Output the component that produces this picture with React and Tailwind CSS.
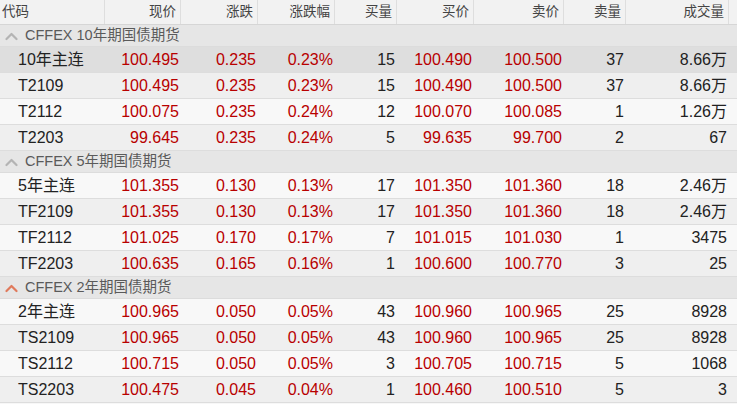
import React from "react";

const cols = ["w-[105px]", "w-[76px]", "w-[77px]", "w-[77px]", "w-[62px]", "w-[77px]", "w-[90px]", "w-[62px]", "w-[103px]"];
const heads = ["代码", "现价", "涨跌", "涨跌幅", "买量", "买价", "卖价", "卖量", "成交量"];
const red = [false, true, true, true, false, true, true, false, false];

const groups = [
  {
    title: "CFFEX 10年期国债期货",
    accent: false,
    rows: [
      ["10年主连", "100.495", "0.235", "0.23%", "15", "100.490", "100.500", "37", "8.66万"],
      ["T2109", "100.495", "0.235", "0.23%", "15", "100.490", "100.500", "37", "8.66万"],
      ["T2112", "100.075", "0.235", "0.24%", "12", "100.070", "100.085", "1", "1.26万"],
      ["T2203", "99.645", "0.235", "0.24%", "5", "99.635", "99.700", "2", "67"],
    ],
  },
  {
    title: "CFFEX 5年期国债期货",
    accent: false,
    rows: [
      ["5年主连", "101.355", "0.130", "0.13%", "17", "101.350", "101.360", "18", "2.46万"],
      ["TF2109", "101.355", "0.130", "0.13%", "17", "101.350", "101.360", "18", "2.46万"],
      ["TF2112", "101.025", "0.170", "0.17%", "7", "101.015", "101.030", "1", "3475"],
      ["TF2203", "100.635", "0.165", "0.16%", "1", "100.600", "100.770", "3", "25"],
    ],
  },
  {
    title: "CFFEX 2年期国债期货",
    accent: true,
    rows: [
      ["2年主连", "100.965", "0.050", "0.05%", "43", "100.960", "100.965", "25", "8928"],
      ["TS2109", "100.965", "0.050", "0.05%", "43", "100.960", "100.965", "25", "8928"],
      ["TS2112", "100.715", "0.050", "0.05%", "3", "100.705", "100.715", "5", "1068"],
      ["TS2203", "100.475", "0.045", "0.04%", "1", "100.460", "100.510", "5", "3"],
    ],
  },
];

function Chevron({ accent }) {
  return (
    <svg width="13" height="10" viewBox="0 0 13 10" className="shrink-0">
      <polyline
        points="1.5,8 6.5,3 11.5,8"
        fill="none"
        stroke={accent ? "#e07a5c" : "#b4b4b4"}
        strokeWidth="2.2"
        strokeLinecap="round"
        strokeLinejoin="round"
      />
    </svg>
  );
}

export default function App() {
  return (
    <div className="w-[737px] h-[404px] overflow-hidden bg-[#f7f7f7] font-['Liberation_Sans','Noto_Sans_CJK_SC',sans-serif]">
      <div className="flex h-[25px] bg-[#f2f2f2] border-b border-[#d6d6d6] text-[13.5px] text-[#444]">
        {heads.map((h, i) => (
          <div
            key={h}
            className={`${cols[i]} shrink-0 flex items-center border-r border-[#dedede] ${i === 0 ? "justify-start pl-[2px]" : "justify-end pr-[4px]"}`}
          >
            {h}
          </div>
        ))}
        <div className="flex-1" />
      </div>
      {groups.map((g, gi) => (
        <div key={gi}>
          <div className="flex items-center h-[22px] bg-[#e6e6e6] border-b border-[#dcdcdc] pl-[5px] gap-[7px] text-[14.5px] text-[#5a5a5a]">
            <Chevron accent={g.accent} />
            <span>{g.title}</span>
          </div>
          {g.rows.map((r, ri) => {
            const bg = gi === 0 && ri === 0 ? "bg-[#dedede]" : ri % 2 === 1 ? "bg-[#efefef]" : "bg-[#f8f8f8]";
            return (
              <div key={ri} className={`flex h-[26px] border-b border-[#dddddd] text-[16px] ${bg}`}>
                {r.map((c, ci) => (
                  <div
                    key={ci}
                    className={`${cols[ci]} shrink-0 flex items-center ${ci === 0 ? "justify-start pl-[18px]" : "justify-end pr-[2px]"} ${red[ci] ? "text-[#b80000]" : "text-[#222]"}`}
                  >
                    {c}
                  </div>
                ))}
                <div className="flex-1" />
              </div>
            );
          })}
        </div>
      ))}
    </div>
  );
}
